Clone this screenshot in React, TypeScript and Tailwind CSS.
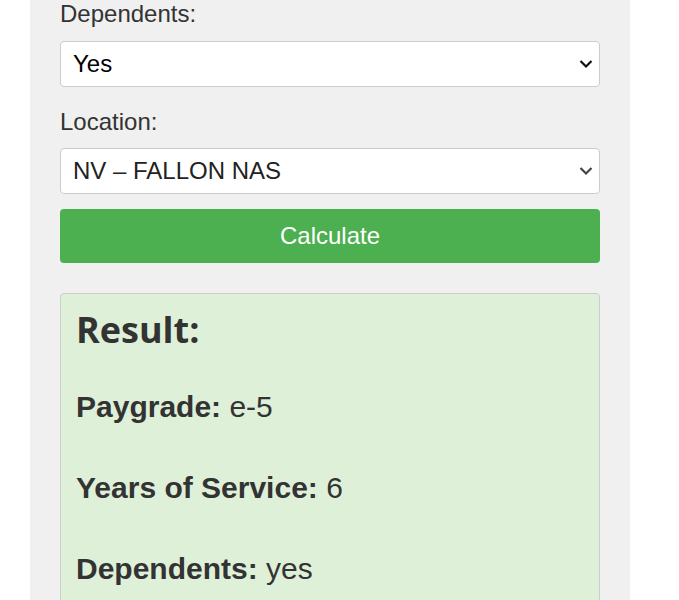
import React from "react";

function Chevron({ color }: { color: string }) {
  return (
    <svg
      width="14"
      height="9"
      viewBox="0 0 14 9"
      className="pointer-events-none absolute right-[7px] top-1/2 -translate-y-1/2"
    >
      <path d="M1.5 1.5 L7 7 L12.5 1.5" fill="none" stroke={color} strokeWidth="2.2" />
    </svg>
  );
}

function Select({ value, color, chevron }: { value: string; color: string; chevron: string }) {
  return (
    <div className="relative">
      <select
        defaultValue={value}
        className="block h-[46px] w-full appearance-none rounded-[4px] border border-[#cccccc] bg-white pl-[12px] pr-[30px] text-[24px] outline-none"
        style={{ color, fontFamily: '"Liberation Sans", Arial, sans-serif' }}
      >
        <option>{value}</option>
      </select>
      <Chevron color={chevron} />
    </div>
  );
}

export default function App() {
  const sans = { fontFamily: '"Liberation Sans", Arial, sans-serif' };
  return (
    <div className="min-h-screen bg-white" style={sans}>
      <div className="ml-[30px] min-h-screen w-[600px] bg-[#f0f0f0] px-[30px] pb-[30px] text-[#333333]">
        <label className="mb-[13px] block text-[24px] leading-[28px]">Dependents:</label>
        <Select value="Yes" color="#000000" chevron="#111111" />
        <label className="mb-[12px] mt-[21px] block text-[24px] leading-[28px]">Location:</label>
        <Select value="NV – FALLON NAS" color="#222222" chevron="#444444" />
        <button
          className="mt-[15px] block h-[54px] w-full rounded-[4px] bg-[#4caf50] text-[24px] text-white"
          style={sans}
        >
          Calculate
        </button>
        <div className="mt-[30px] rounded-[4px] border border-[#cccccc] bg-[#dff0d8] px-[15px] pb-[15px] pt-[12px]">
          <h2
            className="m-0 text-[36px] font-bold leading-[48px] text-[#333333]"
            style={{ fontFamily: '"Open Sans", sans-serif' }}
          >
            Result:
          </h2>
          <div className="mt-[28px] flex flex-col gap-[31px] text-[30px] leading-[50px]">
            <p>
              <strong>Paygrade:</strong> e-5
            </p>
            <p>
              <strong>Years of Service:</strong> 6
            </p>
            <p>
              <strong>Dependents:</strong> yes
            </p>
            <p>
              <strong>Location:</strong> NV – FALLON NAS
            </p>
          </div>
        </div>
      </div>
    </div>
  );
}
